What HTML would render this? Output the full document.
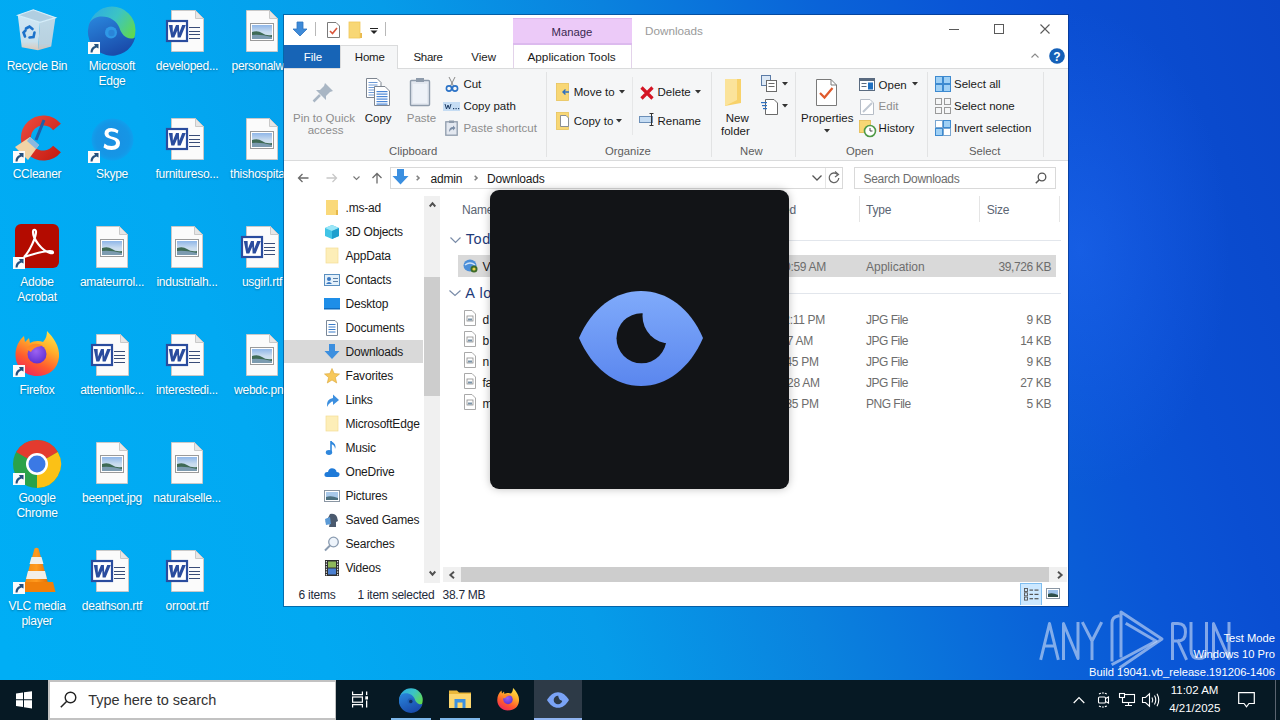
<!DOCTYPE html>
<html><head><meta charset="utf-8"><title>Desktop</title>
<style>
html,body{margin:0;padding:0;}
body{width:1280px;height:720px;overflow:hidden;position:relative;font-family:"Liberation Sans",sans-serif;}
.t{position:absolute;white-space:nowrap;line-height:1;}
.r{position:absolute;display:block;}
svg.r{overflow:visible;}
</style></head><body>
<div class="r" style="left:0;top:0;width:1280px;height:720px;background:radial-gradient(ellipse 150px 240px at 1080px 250px,rgba(40,110,250,.4),rgba(40,110,250,0)),linear-gradient(71deg,#00aef5 1.8%,#02a9f2 22.7%,#069ce9 41.1%,#0a82de 55.5%,#0a63d8 69.9%,#0a55d6 79%,#0a4ed2 85.6%,#0a46c8 100%);"></div>
<svg class="r" style="left:10px;top:4px" width="56" height="56" viewBox="0 0 56 56"><defs><linearGradient id="rbl" x1="0" y1="0" x2="0" y2="1"><stop offset="0" stop-color="#e6eef5"/><stop offset="0.75" stop-color="#dfe6ec"/><stop offset="1" stop-color="#f4cdb4"/></linearGradient><linearGradient id="rbr" x1="0" y1="0" x2="0" y2="1"><stop offset="0" stop-color="#d3dde6"/><stop offset="0.8" stop-color="#cdd6de"/><stop offset="1" stop-color="#e9c6b2"/></linearGradient></defs><g opacity="0.9"><path d="M7.8 11.3 L30 18.3 L28 46.3 L11.7 43.2 Z" fill="url(#rbl)"/><path d="M30 18.3 L45.5 13.6 L41.2 42.4 L28 46.3 Z" fill="url(#rbr)"/><path d="M7.8 11.3 L23.3 5.8 L45.5 13.6 L30 18.3 Z" fill="#c3d3e0" stroke="#eef5fa" stroke-width="1.2"/><g fill="none" stroke="#1f6cc6" stroke-width="2.6" stroke-linecap="round"><path d="M16 24.5 L19.5 22.5 L22.5 25"/><path d="M24.5 28.5 L23.5 33 L19.5 33.5"/><path d="M15 32.5 L13.5 28.5 L15.5 26.5"/></g></g></svg>
<div class="t" style="left:-163px;width:400px;text-align:center;top:60.00px;font-size:12px;color:#fff;text-shadow:0 1px 2px rgba(0,0,0,.3);letter-spacing:-0.25px;">Recycle Bin</div>
<svg class="r" style="left:12px;top:114px" width="50" height="48" viewBox="0 0 50 48"><defs><linearGradient id="ccr" x1="0" y1="0" x2="1" y2="1"><stop offset="0" stop-color="#e8473a"/><stop offset="1" stop-color="#c81e14"/></linearGradient></defs><path d="M45 13 A17.5 17.5 0 1 0 45 35" fill="none" stroke="url(#ccr)" stroke-width="10"/><path d="M32 6 L24 26" stroke="#1f5fa8" stroke-width="3"/><path d="M3 33 L18 23 L27 31 L16 46 Z" fill="#f1d3a6"/><path d="M18 23 L27 31 L24 35 L15 27 Z" fill="#8ab8e0"/></svg>
<svg class="r" style="left:13px;top:151px" width="12" height="12" viewBox="0 0 12 12"><rect x="0" y="0" width="12" height="12" fill="#fbfbfb"/><path d="M2.5 10.5 Q2.5 5 7 4 L6 2 L10.5 2 L10.5 6.5 L8.5 5.5 Q5 6.5 4.5 10.5 Z" fill="#24507e"/></svg>
<div class="t" style="left:-163px;width:400px;text-align:center;top:168.00px;font-size:12px;color:#fff;text-shadow:0 1px 2px rgba(0,0,0,.3);letter-spacing:-0.25px;">CCleaner</div>
<svg class="r" style="left:14px;top:223px" width="46" height="46" viewBox="0 0 46 46"><rect x="1" y="1" width="44" height="44" rx="6" fill="#b30b00"/><path d="M10 34 C16 28 22 14 22 9 C22 6 19 6 19 9 C19 16 28 28 36 30 C40 31 40 28 36 28 C28 28 16 32 10 34 Z" fill="none" stroke="#fff" stroke-width="2.2"/></svg>
<svg class="r" style="left:13px;top:257px" width="12" height="12" viewBox="0 0 12 12"><rect x="0" y="0" width="12" height="12" fill="#fbfbfb"/><path d="M2.5 10.5 Q2.5 5 7 4 L6 2 L10.5 2 L10.5 6.5 L8.5 5.5 Q5 6.5 4.5 10.5 Z" fill="#24507e"/></svg>
<div class="t" style="left:-163px;width:400px;text-align:center;top:276.00px;font-size:12px;color:#fff;text-shadow:0 1px 2px rgba(0,0,0,.3);letter-spacing:-0.25px;">Adobe</div>
<div class="t" style="left:-163px;width:400px;text-align:center;top:291.00px;font-size:12px;color:#fff;text-shadow:0 1px 2px rgba(0,0,0,.3);letter-spacing:-0.25px;">Acrobat</div>
<svg class="r" style="left:13px;top:329px" width="50" height="50" viewBox="0 0 50 50"><defs><linearGradient id="ff" x1="0.8" y1="0" x2="0.3" y2="1"><stop offset="0" stop-color="#ffe34a"/><stop offset="0.35" stop-color="#ffae2a"/><stop offset="0.7" stop-color="#ff5a2e"/><stop offset="1" stop-color="#f0285a"/></linearGradient><radialGradient id="ffp" cx="0.45" cy="0.35" r="0.7"><stop offset="0" stop-color="#9c62f2"/><stop offset="1" stop-color="#5d2ed0"/></radialGradient></defs><path d="M34 2 C40 8 47 17 46 28 C45 40 36 47 24 47 C12 47 2.5 38 2.5 26 C2.5 18 6 11 11 7 L12 13 L16 9 L17 14 C20 12 26 11 30 13 C33 10 34 6 34 2 Z" fill="url(#ff)"/><circle cx="24" cy="25" r="9.5" fill="url(#ffp)"/><path d="M13 20 C16 15 24 13 30 17 C25 17 20 19 18 23 Z" fill="#ff8a28"/></svg>
<svg class="r" style="left:13px;top:365px" width="12" height="12" viewBox="0 0 12 12"><rect x="0" y="0" width="12" height="12" fill="#fbfbfb"/><path d="M2.5 10.5 Q2.5 5 7 4 L6 2 L10.5 2 L10.5 6.5 L8.5 5.5 Q5 6.5 4.5 10.5 Z" fill="#24507e"/></svg>
<div class="t" style="left:-163px;width:400px;text-align:center;top:384.00px;font-size:12px;color:#fff;text-shadow:0 1px 2px rgba(0,0,0,.3);letter-spacing:-0.25px;">Firefox</div>
<svg class="r" style="left:12px;top:439px" width="50" height="50" viewBox="0 0 50 50"><circle cx="25" cy="25" r="24" fill="#2aa24a"/><path d="M25 25 L4.2 13 A24 24 0 0 1 45.8 13 Z" fill="#e33b2e"/><path d="M25 25 L45.8 13 A24 24 0 0 1 25 49 Z" fill="#fbc116"/><circle cx="25" cy="25" r="11" fill="#fff"/><circle cx="25" cy="25" r="8.5" fill="#3b79e5"/></svg>
<svg class="r" style="left:13px;top:473px" width="12" height="12" viewBox="0 0 12 12"><rect x="0" y="0" width="12" height="12" fill="#fbfbfb"/><path d="M2.5 10.5 Q2.5 5 7 4 L6 2 L10.5 2 L10.5 6.5 L8.5 5.5 Q5 6.5 4.5 10.5 Z" fill="#24507e"/></svg>
<div class="t" style="left:-163px;width:400px;text-align:center;top:492.00px;font-size:12px;color:#fff;text-shadow:0 1px 2px rgba(0,0,0,.3);letter-spacing:-0.25px;">Google</div>
<div class="t" style="left:-163px;width:400px;text-align:center;top:507.00px;font-size:12px;color:#fff;text-shadow:0 1px 2px rgba(0,0,0,.3);letter-spacing:-0.25px;">Chrome</div>
<svg class="r" style="left:15px;top:547px" width="44" height="48" viewBox="0 0 44 48"><defs><linearGradient id="vlc" x1="0" y1="0" x2="1" y2="0"><stop offset="0" stop-color="#f28a12"/><stop offset="0.5" stop-color="#ff9a1e"/><stop offset="1" stop-color="#e0700a"/></linearGradient></defs><path d="M19.5 1.5 Q21.5 0 23.5 1.5 L33 36 H10 Z" fill="url(#vlc)"/><path d="M16.5 10 H26.5 L28.5 17 H14.5 Z" fill="#f2efe9"/><path d="M13 24 H30 L32 32 H11 Z" fill="#f2efe9"/><path d="M5 35 H38 L40.5 45 H5.5 Z" fill="#f07f0a"/></svg>
<svg class="r" style="left:13px;top:582px" width="12" height="12" viewBox="0 0 12 12"><rect x="0" y="0" width="12" height="12" fill="#fbfbfb"/><path d="M2.5 10.5 Q2.5 5 7 4 L6 2 L10.5 2 L10.5 6.5 L8.5 5.5 Q5 6.5 4.5 10.5 Z" fill="#24507e"/></svg>
<div class="t" style="left:-163px;width:400px;text-align:center;top:600.00px;font-size:12px;color:#fff;text-shadow:0 1px 2px rgba(0,0,0,.3);letter-spacing:-0.25px;">VLC media</div>
<div class="t" style="left:-163px;width:400px;text-align:center;top:615.00px;font-size:12px;color:#fff;text-shadow:0 1px 2px rgba(0,0,0,.3);letter-spacing:-0.25px;">player</div>
<svg class="r" style="left:84px;top:2px" width="56" height="56" viewBox="0 0 56 56"><defs><linearGradient id="eg" x1="0" y1="0" x2="1" y2="0.7"><stop offset="0" stop-color="#2aa8e8"/><stop offset="0.5" stop-color="#3cc4c4"/><stop offset="1" stop-color="#66dc3c"/></linearGradient><linearGradient id="eb" x1="0" y1="0" x2="0.5" y2="1"><stop offset="0" stop-color="#2a88de"/><stop offset="1" stop-color="#1a4cab"/></linearGradient></defs><circle cx="28" cy="28" r="23.5" fill="url(#eg)"/><path d="M4.6 24 C6 17 12 14.5 18 14.5 C26 14.5 33 19 35.5 26 C37 31 41 36.5 47 36.5 C49 36.5 50.5 36 51.2 35.5 A23.5 23.5 0 0 1 4.6 24 Z" fill="url(#eb)"/><circle cx="27" cy="30.5" r="6" fill="#2f98e6"/><circle cx="27.5" cy="31" r="3.2" fill="#2a84d8"/></svg>
<svg class="r" style="left:88px;top:42px" width="12" height="12" viewBox="0 0 12 12"><rect x="0" y="0" width="12" height="12" fill="#fbfbfb"/><path d="M2.5 10.5 Q2.5 5 7 4 L6 2 L10.5 2 L10.5 6.5 L8.5 5.5 Q5 6.5 4.5 10.5 Z" fill="#24507e"/></svg>
<div class="t" style="left:-88px;width:400px;text-align:center;top:60.00px;font-size:12px;color:#fff;text-shadow:0 1px 2px rgba(0,0,0,.3);letter-spacing:-0.25px;">Microsoft</div>
<div class="t" style="left:-88px;width:400px;text-align:center;top:75.00px;font-size:12px;color:#fff;text-shadow:0 1px 2px rgba(0,0,0,.3);letter-spacing:-0.25px;">Edge</div>
<svg class="r" style="left:90px;top:117px" width="45" height="45" viewBox="0 0 45 45"><defs><radialGradient id="sk" cx="0.5" cy="0.5" r="0.5"><stop offset="0" stop-color="#1a8fe2"/><stop offset="0.8" stop-color="#1596e6"/><stop offset="1" stop-color="#0ea0ee"/></radialGradient></defs><circle cx="22.5" cy="22.5" r="21" fill="url(#sk)"/><path d="M28.5 13.5 Q25.5 11 21.5 11 Q14.5 11 14.5 16.5 Q14.5 20.5 21 22 Q26 23 26 26 Q26 29 21.5 29 Q17 29 14.5 26.5 L13.5 30.5 Q17 33 21.5 33 Q30 33 30 26 Q30 21.5 23.5 20 Q18.5 19 18.5 16.5 Q18.5 14.5 21.5 14.5 Q25 14.5 27.5 16.5 Z" fill="#fff"/></svg>
<svg class="r" style="left:88px;top:151px" width="12" height="12" viewBox="0 0 12 12"><rect x="0" y="0" width="12" height="12" fill="#fbfbfb"/><path d="M2.5 10.5 Q2.5 5 7 4 L6 2 L10.5 2 L10.5 6.5 L8.5 5.5 Q5 6.5 4.5 10.5 Z" fill="#24507e"/></svg>
<div class="t" style="left:-88px;width:400px;text-align:center;top:168.00px;font-size:12px;color:#fff;text-shadow:0 1px 2px rgba(0,0,0,.3);letter-spacing:-0.25px;">Skype</div>
<svg class="r" style="left:96px;top:226px" width="32" height="42" viewBox="0 0 32 42"><path d="M0.5 0.5 H23.5 L31.5 8.5 V41.5 H0.5 Z" fill="#fbfbfb" stroke="#c9c9c9" stroke-width="1"/><path d="M23.5 0.5 V8.5 H31.5 Z" fill="#e6e6e6" stroke="#c9c9c9" stroke-width="1"/></svg>
<svg class="r" style="left:100px;top:239px" width="24" height="18" viewBox="0 0 24 18"><defs><linearGradient id="sky" x1="0" y1="0" x2="0" y2="1"><stop offset="0" stop-color="#8fb6e8"/><stop offset="0.5" stop-color="#c9dcef"/><stop offset="1" stop-color="#d8e6f0"/></linearGradient></defs><rect x="0.5" y="0.5" width="23" height="17" fill="#fff" stroke="#9a9a9a"/><rect x="2" y="2" width="20" height="14" fill="url(#sky)"/><path d="M2 9 Q8 7 12 10 T22 12 V16 H2 Z" fill="#3e6a55"/><path d="M2 12 Q10 11 22 14 V16 H2 Z" fill="#7c9bb0"/></svg>
<div class="t" style="left:-88px;width:400px;text-align:center;top:276.00px;font-size:12px;color:#fff;text-shadow:0 1px 2px rgba(0,0,0,.3);letter-spacing:-0.25px;">amateurrol...</div>
<svg class="r" style="left:96px;top:334px" width="33" height="42" viewBox="0 0 33 42"><path d="M0.5 0.5 H24.5 L32.5 8.5 V41.5 H0.5 Z" fill="#fbfbfb" stroke="#c9c9c9" stroke-width="1"/><path d="M24.5 0.5 V8.5 H32.5 Z" fill="#e6e6e6" stroke="#c9c9c9" stroke-width="1"/></svg>
<div class="r" style="left:114px;top:351.0px;width:11px;height:1.3px;background:#3a4d78;"></div>
<div class="r" style="left:114px;top:354.6px;width:11px;height:1.3px;background:#3a4d78;"></div>
<div class="r" style="left:114px;top:358.2px;width:11px;height:1.3px;background:#3a4d78;"></div>
<div class="r" style="left:114px;top:361.8px;width:11px;height:1.3px;background:#3a4d78;"></div>
<svg class="r" style="left:91px;top:344px" width="22" height="22" viewBox="0 0 22 22"><rect x="1" y="1" width="20" height="20" fill="#fff" stroke="#2a4c9e" stroke-width="2.2"/><path d="M2.8 5 H6.6 L6.9 12.8 L10 5 H12.9 L13.2 12.8 L16.2 5 H19.8 L14.6 17.5 H11.6 L11.3 10.6 L8.3 17.5 H5.3 Z" fill="#2a4c9e"/></svg>
<div class="t" style="left:-88px;width:400px;text-align:center;top:384.00px;font-size:12px;color:#fff;text-shadow:0 1px 2px rgba(0,0,0,.3);letter-spacing:-0.25px;">attentionllc...</div>
<svg class="r" style="left:96px;top:442px" width="32" height="42" viewBox="0 0 32 42"><path d="M0.5 0.5 H23.5 L31.5 8.5 V41.5 H0.5 Z" fill="#fbfbfb" stroke="#c9c9c9" stroke-width="1"/><path d="M23.5 0.5 V8.5 H31.5 Z" fill="#e6e6e6" stroke="#c9c9c9" stroke-width="1"/></svg>
<svg class="r" style="left:100px;top:455px" width="24" height="18" viewBox="0 0 24 18"><defs><linearGradient id="sky" x1="0" y1="0" x2="0" y2="1"><stop offset="0" stop-color="#8fb6e8"/><stop offset="0.5" stop-color="#c9dcef"/><stop offset="1" stop-color="#d8e6f0"/></linearGradient></defs><rect x="0.5" y="0.5" width="23" height="17" fill="#fff" stroke="#9a9a9a"/><rect x="2" y="2" width="20" height="14" fill="url(#sky)"/><path d="M2 9 Q8 7 12 10 T22 12 V16 H2 Z" fill="#3e6a55"/><path d="M2 12 Q10 11 22 14 V16 H2 Z" fill="#7c9bb0"/></svg>
<div class="t" style="left:-88px;width:400px;text-align:center;top:492.00px;font-size:12px;color:#fff;text-shadow:0 1px 2px rgba(0,0,0,.3);letter-spacing:-0.25px;">beenpet.jpg</div>
<svg class="r" style="left:96px;top:550px" width="33" height="42" viewBox="0 0 33 42"><path d="M0.5 0.5 H24.5 L32.5 8.5 V41.5 H0.5 Z" fill="#fbfbfb" stroke="#c9c9c9" stroke-width="1"/><path d="M24.5 0.5 V8.5 H32.5 Z" fill="#e6e6e6" stroke="#c9c9c9" stroke-width="1"/></svg>
<div class="r" style="left:114px;top:567.0px;width:11px;height:1.3px;background:#3a4d78;"></div>
<div class="r" style="left:114px;top:570.6px;width:11px;height:1.3px;background:#3a4d78;"></div>
<div class="r" style="left:114px;top:574.2px;width:11px;height:1.3px;background:#3a4d78;"></div>
<div class="r" style="left:114px;top:577.8px;width:11px;height:1.3px;background:#3a4d78;"></div>
<svg class="r" style="left:91px;top:560px" width="22" height="22" viewBox="0 0 22 22"><rect x="1" y="1" width="20" height="20" fill="#fff" stroke="#2a4c9e" stroke-width="2.2"/><path d="M2.8 5 H6.6 L6.9 12.8 L10 5 H12.9 L13.2 12.8 L16.2 5 H19.8 L14.6 17.5 H11.6 L11.3 10.6 L8.3 17.5 H5.3 Z" fill="#2a4c9e"/></svg>
<div class="t" style="left:-88px;width:400px;text-align:center;top:600.00px;font-size:12px;color:#fff;text-shadow:0 1px 2px rgba(0,0,0,.3);letter-spacing:-0.25px;">deathson.rtf</div>
<svg class="r" style="left:171px;top:10px" width="33" height="42" viewBox="0 0 33 42"><path d="M0.5 0.5 H24.5 L32.5 8.5 V41.5 H0.5 Z" fill="#fbfbfb" stroke="#c9c9c9" stroke-width="1"/><path d="M24.5 0.5 V8.5 H32.5 Z" fill="#e6e6e6" stroke="#c9c9c9" stroke-width="1"/></svg>
<div class="r" style="left:189px;top:27.0px;width:11px;height:1.3px;background:#3a4d78;"></div>
<div class="r" style="left:189px;top:30.6px;width:11px;height:1.3px;background:#3a4d78;"></div>
<div class="r" style="left:189px;top:34.2px;width:11px;height:1.3px;background:#3a4d78;"></div>
<div class="r" style="left:189px;top:37.8px;width:11px;height:1.3px;background:#3a4d78;"></div>
<svg class="r" style="left:166px;top:20px" width="22" height="22" viewBox="0 0 22 22"><rect x="1" y="1" width="20" height="20" fill="#fff" stroke="#2a4c9e" stroke-width="2.2"/><path d="M2.8 5 H6.6 L6.9 12.8 L10 5 H12.9 L13.2 12.8 L16.2 5 H19.8 L14.6 17.5 H11.6 L11.3 10.6 L8.3 17.5 H5.3 Z" fill="#2a4c9e"/></svg>
<div class="t" style="left:-13px;width:400px;text-align:center;top:60.00px;font-size:12px;color:#fff;text-shadow:0 1px 2px rgba(0,0,0,.3);letter-spacing:-0.25px;">developed...</div>
<svg class="r" style="left:171px;top:118px" width="33" height="42" viewBox="0 0 33 42"><path d="M0.5 0.5 H24.5 L32.5 8.5 V41.5 H0.5 Z" fill="#fbfbfb" stroke="#c9c9c9" stroke-width="1"/><path d="M24.5 0.5 V8.5 H32.5 Z" fill="#e6e6e6" stroke="#c9c9c9" stroke-width="1"/></svg>
<div class="r" style="left:189px;top:135.0px;width:11px;height:1.3px;background:#3a4d78;"></div>
<div class="r" style="left:189px;top:138.6px;width:11px;height:1.3px;background:#3a4d78;"></div>
<div class="r" style="left:189px;top:142.2px;width:11px;height:1.3px;background:#3a4d78;"></div>
<div class="r" style="left:189px;top:145.8px;width:11px;height:1.3px;background:#3a4d78;"></div>
<svg class="r" style="left:166px;top:128px" width="22" height="22" viewBox="0 0 22 22"><rect x="1" y="1" width="20" height="20" fill="#fff" stroke="#2a4c9e" stroke-width="2.2"/><path d="M2.8 5 H6.6 L6.9 12.8 L10 5 H12.9 L13.2 12.8 L16.2 5 H19.8 L14.6 17.5 H11.6 L11.3 10.6 L8.3 17.5 H5.3 Z" fill="#2a4c9e"/></svg>
<div class="t" style="left:-13px;width:400px;text-align:center;top:168.00px;font-size:12px;color:#fff;text-shadow:0 1px 2px rgba(0,0,0,.3);letter-spacing:-0.25px;">furnitureso...</div>
<svg class="r" style="left:171px;top:226px" width="32" height="42" viewBox="0 0 32 42"><path d="M0.5 0.5 H23.5 L31.5 8.5 V41.5 H0.5 Z" fill="#fbfbfb" stroke="#c9c9c9" stroke-width="1"/><path d="M23.5 0.5 V8.5 H31.5 Z" fill="#e6e6e6" stroke="#c9c9c9" stroke-width="1"/></svg>
<svg class="r" style="left:175px;top:239px" width="24" height="18" viewBox="0 0 24 18"><defs><linearGradient id="sky" x1="0" y1="0" x2="0" y2="1"><stop offset="0" stop-color="#8fb6e8"/><stop offset="0.5" stop-color="#c9dcef"/><stop offset="1" stop-color="#d8e6f0"/></linearGradient></defs><rect x="0.5" y="0.5" width="23" height="17" fill="#fff" stroke="#9a9a9a"/><rect x="2" y="2" width="20" height="14" fill="url(#sky)"/><path d="M2 9 Q8 7 12 10 T22 12 V16 H2 Z" fill="#3e6a55"/><path d="M2 12 Q10 11 22 14 V16 H2 Z" fill="#7c9bb0"/></svg>
<div class="t" style="left:-13px;width:400px;text-align:center;top:276.00px;font-size:12px;color:#fff;text-shadow:0 1px 2px rgba(0,0,0,.3);letter-spacing:-0.25px;">industrialh...</div>
<svg class="r" style="left:171px;top:334px" width="33" height="42" viewBox="0 0 33 42"><path d="M0.5 0.5 H24.5 L32.5 8.5 V41.5 H0.5 Z" fill="#fbfbfb" stroke="#c9c9c9" stroke-width="1"/><path d="M24.5 0.5 V8.5 H32.5 Z" fill="#e6e6e6" stroke="#c9c9c9" stroke-width="1"/></svg>
<div class="r" style="left:189px;top:351.0px;width:11px;height:1.3px;background:#3a4d78;"></div>
<div class="r" style="left:189px;top:354.6px;width:11px;height:1.3px;background:#3a4d78;"></div>
<div class="r" style="left:189px;top:358.2px;width:11px;height:1.3px;background:#3a4d78;"></div>
<div class="r" style="left:189px;top:361.8px;width:11px;height:1.3px;background:#3a4d78;"></div>
<svg class="r" style="left:166px;top:344px" width="22" height="22" viewBox="0 0 22 22"><rect x="1" y="1" width="20" height="20" fill="#fff" stroke="#2a4c9e" stroke-width="2.2"/><path d="M2.8 5 H6.6 L6.9 12.8 L10 5 H12.9 L13.2 12.8 L16.2 5 H19.8 L14.6 17.5 H11.6 L11.3 10.6 L8.3 17.5 H5.3 Z" fill="#2a4c9e"/></svg>
<div class="t" style="left:-13px;width:400px;text-align:center;top:384.00px;font-size:12px;color:#fff;text-shadow:0 1px 2px rgba(0,0,0,.3);letter-spacing:-0.25px;">interestedi...</div>
<svg class="r" style="left:171px;top:442px" width="32" height="42" viewBox="0 0 32 42"><path d="M0.5 0.5 H23.5 L31.5 8.5 V41.5 H0.5 Z" fill="#fbfbfb" stroke="#c9c9c9" stroke-width="1"/><path d="M23.5 0.5 V8.5 H31.5 Z" fill="#e6e6e6" stroke="#c9c9c9" stroke-width="1"/></svg>
<svg class="r" style="left:175px;top:455px" width="24" height="18" viewBox="0 0 24 18"><defs><linearGradient id="sky" x1="0" y1="0" x2="0" y2="1"><stop offset="0" stop-color="#8fb6e8"/><stop offset="0.5" stop-color="#c9dcef"/><stop offset="1" stop-color="#d8e6f0"/></linearGradient></defs><rect x="0.5" y="0.5" width="23" height="17" fill="#fff" stroke="#9a9a9a"/><rect x="2" y="2" width="20" height="14" fill="url(#sky)"/><path d="M2 9 Q8 7 12 10 T22 12 V16 H2 Z" fill="#3e6a55"/><path d="M2 12 Q10 11 22 14 V16 H2 Z" fill="#7c9bb0"/></svg>
<div class="t" style="left:-13px;width:400px;text-align:center;top:492.00px;font-size:12px;color:#fff;text-shadow:0 1px 2px rgba(0,0,0,.3);letter-spacing:-0.25px;">naturalselle...</div>
<svg class="r" style="left:171px;top:550px" width="33" height="42" viewBox="0 0 33 42"><path d="M0.5 0.5 H24.5 L32.5 8.5 V41.5 H0.5 Z" fill="#fbfbfb" stroke="#c9c9c9" stroke-width="1"/><path d="M24.5 0.5 V8.5 H32.5 Z" fill="#e6e6e6" stroke="#c9c9c9" stroke-width="1"/></svg>
<div class="r" style="left:189px;top:567.0px;width:11px;height:1.3px;background:#3a4d78;"></div>
<div class="r" style="left:189px;top:570.6px;width:11px;height:1.3px;background:#3a4d78;"></div>
<div class="r" style="left:189px;top:574.2px;width:11px;height:1.3px;background:#3a4d78;"></div>
<div class="r" style="left:189px;top:577.8px;width:11px;height:1.3px;background:#3a4d78;"></div>
<svg class="r" style="left:166px;top:560px" width="22" height="22" viewBox="0 0 22 22"><rect x="1" y="1" width="20" height="20" fill="#fff" stroke="#2a4c9e" stroke-width="2.2"/><path d="M2.8 5 H6.6 L6.9 12.8 L10 5 H12.9 L13.2 12.8 L16.2 5 H19.8 L14.6 17.5 H11.6 L11.3 10.6 L8.3 17.5 H5.3 Z" fill="#2a4c9e"/></svg>
<div class="t" style="left:-13px;width:400px;text-align:center;top:600.00px;font-size:12px;color:#fff;text-shadow:0 1px 2px rgba(0,0,0,.3);letter-spacing:-0.25px;">orroot.rtf</div>
<svg class="r" style="left:246px;top:10px" width="32" height="42" viewBox="0 0 32 42"><path d="M0.5 0.5 H23.5 L31.5 8.5 V41.5 H0.5 Z" fill="#fbfbfb" stroke="#c9c9c9" stroke-width="1"/><path d="M23.5 0.5 V8.5 H31.5 Z" fill="#e6e6e6" stroke="#c9c9c9" stroke-width="1"/></svg>
<svg class="r" style="left:250px;top:23px" width="24" height="18" viewBox="0 0 24 18"><defs><linearGradient id="sky" x1="0" y1="0" x2="0" y2="1"><stop offset="0" stop-color="#8fb6e8"/><stop offset="0.5" stop-color="#c9dcef"/><stop offset="1" stop-color="#d8e6f0"/></linearGradient></defs><rect x="0.5" y="0.5" width="23" height="17" fill="#fff" stroke="#9a9a9a"/><rect x="2" y="2" width="20" height="14" fill="url(#sky)"/><path d="M2 9 Q8 7 12 10 T22 12 V16 H2 Z" fill="#3e6a55"/><path d="M2 12 Q10 11 22 14 V16 H2 Z" fill="#7c9bb0"/></svg>
<div class="t" style="left:62px;width:400px;text-align:center;top:60.00px;font-size:12px;color:#fff;text-shadow:0 1px 2px rgba(0,0,0,.3);letter-spacing:-0.25px;">personalw...</div>
<svg class="r" style="left:246px;top:118px" width="32" height="42" viewBox="0 0 32 42"><path d="M0.5 0.5 H23.5 L31.5 8.5 V41.5 H0.5 Z" fill="#fbfbfb" stroke="#c9c9c9" stroke-width="1"/><path d="M23.5 0.5 V8.5 H31.5 Z" fill="#e6e6e6" stroke="#c9c9c9" stroke-width="1"/></svg>
<svg class="r" style="left:250px;top:131px" width="24" height="18" viewBox="0 0 24 18"><defs><linearGradient id="sky" x1="0" y1="0" x2="0" y2="1"><stop offset="0" stop-color="#8fb6e8"/><stop offset="0.5" stop-color="#c9dcef"/><stop offset="1" stop-color="#d8e6f0"/></linearGradient></defs><rect x="0.5" y="0.5" width="23" height="17" fill="#fff" stroke="#9a9a9a"/><rect x="2" y="2" width="20" height="14" fill="url(#sky)"/><path d="M2 9 Q8 7 12 10 T22 12 V16 H2 Z" fill="#3e6a55"/><path d="M2 12 Q10 11 22 14 V16 H2 Z" fill="#7c9bb0"/></svg>
<div class="t" style="left:62px;width:400px;text-align:center;top:168.00px;font-size:12px;color:#fff;text-shadow:0 1px 2px rgba(0,0,0,.3);letter-spacing:-0.25px;">thishospita...</div>
<svg class="r" style="left:246px;top:226px" width="33" height="42" viewBox="0 0 33 42"><path d="M0.5 0.5 H24.5 L32.5 8.5 V41.5 H0.5 Z" fill="#fbfbfb" stroke="#c9c9c9" stroke-width="1"/><path d="M24.5 0.5 V8.5 H32.5 Z" fill="#e6e6e6" stroke="#c9c9c9" stroke-width="1"/></svg>
<div class="r" style="left:264px;top:243.0px;width:11px;height:1.3px;background:#3a4d78;"></div>
<div class="r" style="left:264px;top:246.6px;width:11px;height:1.3px;background:#3a4d78;"></div>
<div class="r" style="left:264px;top:250.2px;width:11px;height:1.3px;background:#3a4d78;"></div>
<div class="r" style="left:264px;top:253.8px;width:11px;height:1.3px;background:#3a4d78;"></div>
<svg class="r" style="left:241px;top:236px" width="22" height="22" viewBox="0 0 22 22"><rect x="1" y="1" width="20" height="20" fill="#fff" stroke="#2a4c9e" stroke-width="2.2"/><path d="M2.8 5 H6.6 L6.9 12.8 L10 5 H12.9 L13.2 12.8 L16.2 5 H19.8 L14.6 17.5 H11.6 L11.3 10.6 L8.3 17.5 H5.3 Z" fill="#2a4c9e"/></svg>
<div class="t" style="left:62px;width:400px;text-align:center;top:276.00px;font-size:12px;color:#fff;text-shadow:0 1px 2px rgba(0,0,0,.3);letter-spacing:-0.25px;">usgirl.rtf</div>
<svg class="r" style="left:246px;top:334px" width="32" height="42" viewBox="0 0 32 42"><path d="M0.5 0.5 H23.5 L31.5 8.5 V41.5 H0.5 Z" fill="#fbfbfb" stroke="#c9c9c9" stroke-width="1"/><path d="M23.5 0.5 V8.5 H31.5 Z" fill="#e6e6e6" stroke="#c9c9c9" stroke-width="1"/></svg>
<svg class="r" style="left:250px;top:347px" width="24" height="18" viewBox="0 0 24 18"><defs><linearGradient id="sky" x1="0" y1="0" x2="0" y2="1"><stop offset="0" stop-color="#8fb6e8"/><stop offset="0.5" stop-color="#c9dcef"/><stop offset="1" stop-color="#d8e6f0"/></linearGradient></defs><rect x="0.5" y="0.5" width="23" height="17" fill="#fff" stroke="#9a9a9a"/><rect x="2" y="2" width="20" height="14" fill="url(#sky)"/><path d="M2 9 Q8 7 12 10 T22 12 V16 H2 Z" fill="#3e6a55"/><path d="M2 12 Q10 11 22 14 V16 H2 Z" fill="#7c9bb0"/></svg>
<div class="t" style="left:62px;width:400px;text-align:center;top:384.00px;font-size:12px;color:#fff;text-shadow:0 1px 2px rgba(0,0,0,.3);letter-spacing:-0.25px;">webdc.png</div>
<svg class="r" style="left:1030px;top:600px" width="210" height="75" viewBox="1030 600 210 75"><g fill="none" stroke="rgba(205,220,245,0.62)" stroke-width="3" stroke-linejoin="round" stroke-linecap="square"><path d="M1041 658.5 L1049.5 623.5 L1058 658.5 M1044.5 646 H1054.5"/><path d="M1063.5 658.5 V623.5 L1078 658.5 V623.5"/><path d="M1083 623.5 L1092 641 L1101 623.5 M1092 641 V658.5"/><path d="M1112 660 V623 Q1112 617 1118 616"/><path d="M1121 656 V612 L1162 639 L1121 667"/><path d="M1127 624 L1156 641 L1113 664"/><path d="M1172.5 658.5 V623.5 H1178 Q1185.5 623.5 1185.5 632 Q1185.5 641 1178 641 H1172.5 M1178 641 L1186 658.5"/><path d="M1191 623.5 V650 Q1191 658.5 1199 658.5 Q1206.5 658.5 1206.5 650 V623.5"/><path d="M1213.5 658.5 V623.5 L1229 658.5 V623.5"/></g></svg>
<div class="t" style="right:5px;top:633.00px;font-size:11.2px;color:#fff;">Test Mode</div>
<div class="t" style="right:5px;top:649.00px;font-size:11.2px;color:#fff;">Windows 10 Pro</div>
<div class="t" style="right:5px;top:667.00px;font-size:11.2px;color:#fff;">Build 19041.vb_release.191206-1406</div>
<div class="r" style="left:283px;top:14px;width:786px;height:593px;background:#fff;box-sizing:border-box;border:1px solid rgba(0,35,90,.45);background-clip:padding-box;"></div>
<svg class="r" style="left:292px;top:21px;" width="16" height="16" viewBox="0 0 16 16"><path d="M5 1 H11 V8 H15 L8 15 L1 8 H5 Z" fill="#3d8ad8" stroke="#2f74c0" stroke-width="0.8"/></svg>
<div class="r" style="left:315px;top:22px;width:1px;height:14px;background:#b8b8b8;"></div>
<svg class="r" style="left:327px;top:22px;" width="13" height="16" viewBox="0 0 13 16"><path d="M0.5 0.5 H9 L12.5 4 V15.5 H0.5 Z" fill="#fff" stroke="#7a7a7a"/><path d="M3 9 L5.5 11.5 L10 6" fill="none" stroke="#d9553a" stroke-width="1.6"/></svg>
<svg class="r" style="left:349px;top:22px;" width="13" height="16" viewBox="0 0 13 16"><rect x="0" y="0" width="11" height="16" fill="#f8d775"/><rect x="11" y="11" width="2" height="5" fill="#e9b94e"/><rect x="0" y="0" width="11" height="16" fill="none" stroke="#f0c75a" stroke-width="0.8"/></svg>
<svg class="r" style="left:370px;top:28px;" width="8" height="6" viewBox="0 0 8 6"><rect x="0" y="0" width="8" height="1" fill="#222"/><path d="M0.5 2.5 H7.5 L4 6 Z" fill="#222"/></svg>
<div class="r" style="left:385px;top:22px;width:1px;height:14px;background:#b8b8b8;"></div>
<div class="r" style="left:513px;top:18px;width:119px;height:27px;background:#eccaf8;box-shadow:inset 0 1px 0 #dcb6ee, inset 0 -2px 0 #dcbaee;"></div>
<div class="t" style="left:372px;width:400px;text-align:center;top:27.00px;font-size:11.3px;color:#3a2850;">Manage</div>
<div class="t" style="left:645px;top:25.00px;font-size:11.7px;color:#9a9a9a;">Downloads</div>
<div class="r" style="left:949px;top:29px;width:10px;height:1px;background:#5a5a5a;"></div>
<div class="r" style="left:994px;top:24px;width:10px;height:10px;background:transparent;box-sizing:border-box;border:1px solid #5a5a5a;"></div>
<svg class="r" style="left:1040px;top:24px;" width="10" height="10" viewBox="0 0 10 10"><path d="M0.5 0.5 L9.5 9.5 M9.5 0.5 L0.5 9.5" stroke="#5a5a5a" stroke-width="1.1"/></svg>
<div class="r" style="left:284px;top:45px;width:56px;height:23px;background:#1764b6;"></div>
<div class="t" style="left:303.7px;top:52.00px;font-size:11.5px;color:#fff;">File</div>
<div class="r" style="left:340px;top:45px;width:58px;height:24px;background:#f5f6f7;box-sizing:border-box;border:1px solid #dadbdc;border-bottom:none;"></div>
<div class="t" style="left:354.8px;top:52.00px;font-size:11.5px;color:#1a1a1a;letter-spacing:-0.2px;">Home</div>
<div class="t" style="left:413.5px;top:52.00px;font-size:11.5px;color:#1a1a1a;letter-spacing:-0.3px;">Share</div>
<div class="t" style="left:471.3px;top:52.00px;font-size:11.5px;color:#1a1a1a;">View</div>
<div class="r" style="left:513px;top:45px;width:1px;height:23px;background:#e3d3ea;"></div>
<div class="r" style="left:631px;top:45px;width:1px;height:23px;background:#e3d3ea;"></div>
<div class="t" style="left:527.4px;top:52.00px;font-size:11.8px;color:#1a1a1a;">Application Tools</div>
<svg class="r" style="left:1031px;top:53px;" width="8" height="5" viewBox="0 0 8 5"><path d="M0.5 4.5 L4 1 L7.5 4.5" fill="none" stroke="#8a8a8a" stroke-width="1.1"/></svg>
<svg class="r" style="left:1049px;top:48px;" width="16" height="16" viewBox="0 0 16 16"><circle cx="8" cy="8" r="7.8" fill="#1560b8"/><text x="8" y="12.6" text-anchor="middle" font-family="Liberation Sans" font-weight="bold" font-size="12" fill="#fff">?</text></svg>
<div class="r" style="left:284px;top:68px;width:784px;height:93px;background:#f5f6f7;box-sizing:border-box;border-top:1px solid #dadbdc;border-bottom:1px solid #dadbdc;"></div>
<div class="r" style="left:340px;top:68px;width:57px;height:1px;background:#f5f6f7;"></div>
<div class="r" style="left:546px;top:72px;width:1px;height:85px;background:#e2e3e4;"></div>
<div class="r" style="left:711px;top:72px;width:1px;height:85px;background:#e2e3e4;"></div>
<div class="r" style="left:795px;top:72px;width:1px;height:85px;background:#e2e3e4;"></div>
<div class="r" style="left:927px;top:72px;width:1px;height:85px;background:#e2e3e4;"></div>
<div class="r" style="left:1043px;top:72px;width:1px;height:85px;background:#e2e3e4;"></div>
<div class="t" style="left:389px;top:146.00px;font-size:11.3px;color:#5d5d5d;">Clipboard</div>
<div class="t" style="left:605px;top:146.00px;font-size:11.3px;color:#5d5d5d;">Organize</div>
<div class="t" style="left:740px;top:146.00px;font-size:11.3px;color:#5d5d5d;">New</div>
<div class="t" style="left:846px;top:146.00px;font-size:11.3px;color:#5d5d5d;">Open</div>
<div class="t" style="left:969px;top:146.00px;font-size:11.3px;color:#5d5d5d;">Select</div>
<svg class="r" style="left:312px;top:82px;" width="22" height="21" viewBox="0 0 22 21"><path d="M13 1 L21 9 L18 10 L14 14 L14 18 L4 8 L8 8 L12 4 Z" fill="#a9b6c4"/><path d="M8 13 L1.5 19.5" stroke="#a9b6c4" stroke-width="2.5"/></svg>
<div class="t" style="left:293px;top:113.00px;font-size:11.5px;color:#8d8d8d;">Pin to Quick</div>
<div class="t" style="left:307.7px;top:125.00px;font-size:11.5px;color:#8d8d8d;">access</div>
<svg class="r" style="left:365px;top:77px;" width="26" height="30" viewBox="0 0 26 30"><path d="M1.5 1.5 H12 L16 5.5 V20.5 H1.5 Z" fill="#fff" stroke="#7d8590"/><rect x="3.5" y="5.0" width="9" height="1" fill="#6e9ad6"/><rect x="3.5" y="7.5" width="9" height="1" fill="#6e9ad6"/><rect x="3.5" y="10.0" width="9" height="1" fill="#6e9ad6"/><rect x="3.5" y="12.5" width="9" height="1" fill="#6e9ad6"/><rect x="3.5" y="15.0" width="9" height="1" fill="#6e9ad6"/><rect x="3.5" y="17.5" width="9" height="1" fill="#6e9ad6"/><path d="M9.5 9.5 H20 L24.5 14 V28.5 H9.5 Z" fill="#fff" stroke="#7d8590"/><rect x="11.5" y="14.0" width="11" height="1.2" fill="#4a86d6"/><rect x="11.5" y="16.5" width="11" height="1.2" fill="#4a86d6"/><rect x="11.5" y="19.0" width="11" height="1.2" fill="#4a86d6"/><rect x="11.5" y="21.5" width="11" height="1.2" fill="#4a86d6"/><rect x="11.5" y="24.0" width="11" height="1.2" fill="#4a86d6"/><rect x="11.5" y="26.5" width="11" height="1.2" fill="#4a86d6"/></svg>
<div class="t" style="left:364.7px;top:113.00px;font-size:11.5px;color:#1a1a1a;">Copy</div>
<svg class="r" style="left:409px;top:77px;" width="22" height="29" viewBox="0 0 22 29"><rect x="1.5" y="3.5" width="19" height="25" rx="1" fill="#e3e8f0" stroke="#8e9bab" stroke-width="1.4"/><rect x="7" y="1" width="8" height="4" fill="#8e9bab"/><rect x="4" y="7" width="14" height="19" fill="#eef2f8"/></svg>
<div class="t" style="left:406.8px;top:113.00px;font-size:11.5px;color:#8d8d8d;">Paste</div>
<svg class="r" style="left:446px;top:76px;" width="12" height="16" viewBox="0 0 12 16"><path d="M3 1 L7.5 10 M9 1 L4.5 10" stroke="#8a8a8a" stroke-width="1"/><circle cx="3" cy="12.5" r="2.6" fill="none" stroke="#2b72c6" stroke-width="1.6"/><circle cx="9" cy="12.5" r="2.6" fill="none" stroke="#2b72c6" stroke-width="1.6"/></svg>
<div class="t" style="left:463.4px;top:79.00px;font-size:11.5px;color:#1a1a1a;">Cut</div>
<svg class="r" style="left:443px;top:102px;" width="17" height="9" viewBox="0 0 17 9"><rect x="0" y="0" width="17" height="9" fill="#c5dcf3"/><path d="M2 2 L3.5 7 L5 3 L6.5 7 L8 2" fill="none" stroke="#1f3d66" stroke-width="1"/><rect x="10" y="6" width="1.2" height="1.2" fill="#1f3d66"/><rect x="12.5" y="6" width="1.2" height="1.2" fill="#1f3d66"/><rect x="15" y="6" width="1.2" height="1.2" fill="#1f3d66"/></svg>
<div class="t" style="left:463.4px;top:101.00px;font-size:11.5px;color:#1a1a1a;">Copy path</div>
<svg class="r" style="left:445px;top:120px;" width="13" height="16" viewBox="0 0 13 16"><rect x="0.8" y="1.8" width="11.4" height="13.4" fill="#e3e8f0" stroke="#8e9bab" stroke-width="1.3"/><rect x="4" y="0.5" width="5" height="2.5" fill="#8e9bab"/><path d="M4 12 Q4 7 8 7 V5.5 L10.5 8 L8 10.5 V9 Q6 9 4 12Z" fill="#7c8ea6"/></svg>
<div class="t" style="left:463.4px;top:123.00px;font-size:11.5px;color:#8d8d8d;">Paste shortcut</div>
<svg class="r" style="left:556px;top:83px;" width="14" height="18" viewBox="0 0 14 18"><rect x="0.5" y="0.5" width="12" height="17" fill="#f8d775" stroke="#e8c25a" stroke-width="0.8"/><path d="M13 9 H7 M9.5 6.5 L7 9 L9.5 11.5" stroke="#2e70c0" stroke-width="1.4" fill="none"/></svg>
<div class="t" style="left:573.7px;top:87.00px;font-size:11.5px;color:#1a1a1a;">Move to</div>
<svg class="r" style="left:619px;top:90px;" width="6" height="4" viewBox="0 0 6 4"><path d="M0 0 H6 L3 3.5 Z" fill="#333"/></svg>
<svg class="r" style="left:556px;top:112px;" width="14" height="18" viewBox="0 0 14 18"><rect x="0.5" y="0.5" width="12" height="17" fill="#f8d775" stroke="#e8c25a" stroke-width="0.8"/><path d="M4.5 3.5 H10 L12.5 6 V14.5 H4.5 Z" fill="#fff" stroke="#7d8590" stroke-width="0.9"/></svg>
<div class="t" style="left:573.7px;top:116.00px;font-size:11.5px;color:#1a1a1a;">Copy to</div>
<svg class="r" style="left:616px;top:119px;" width="6" height="4" viewBox="0 0 6 4"><path d="M0 0 H6 L3 3.5 Z" fill="#333"/></svg>
<div class="r" style="left:632px;top:77px;width:1px;height:58px;background:#e6e7e8;"></div>
<svg class="r" style="left:640px;top:86px;" width="14" height="14" viewBox="0 0 14 14"><path d="M1.5 1.5 L12.5 12.5 M12.5 1.5 L1.5 12.5" stroke="#d41524" stroke-width="3.2"/></svg>
<div class="t" style="left:657.5px;top:87.00px;font-size:11.5px;color:#1a1a1a;">Delete</div>
<svg class="r" style="left:695px;top:90px;" width="6" height="4" viewBox="0 0 6 4"><path d="M0 0 H6 L3 3.5 Z" fill="#333"/></svg>
<svg class="r" style="left:639px;top:113px;" width="17" height="13" viewBox="0 0 17 13"><rect x="0.5" y="3.5" width="13" height="6" fill="#c5dcf3" stroke="#6c8fb8"/><path d="M12.5 0.5 V12.5 M10.5 0.5 H14.5 M10.5 12.5 H14.5" stroke="#333" stroke-width="1"/></svg>
<div class="t" style="left:657.5px;top:116.00px;font-size:11.5px;color:#1a1a1a;">Rename</div>
<svg class="r" style="left:723px;top:78px;" width="22" height="29" viewBox="0 0 22 29"><path d="M2 1 H18 V25 L2 28 Z" fill="#f8d26a"/><path d="M2 1 H14 V22 L2 28 Z" fill="#fbe39a"/></svg>
<div class="t" style="left:725.7px;top:113.00px;font-size:11.5px;color:#1a1a1a;">New</div>
<div class="t" style="left:721px;top:126.00px;font-size:11.5px;color:#1a1a1a;">folder</div>
<svg class="r" style="left:761px;top:75px;" width="17" height="17" viewBox="0 0 17 17"><rect x="0.5" y="0.5" width="9" height="10" fill="#dce8f5" stroke="#5b7ba6"/><rect x="5.5" y="5.5" width="10" height="11" fill="#fff" stroke="#6a6a6a"/><rect x="7.5" y="8" width="6" height="1" fill="#6a6a6a"/><rect x="7.5" y="11" width="6" height="1" fill="#6a6a6a"/></svg>
<svg class="r" style="left:782px;top:82px;" width="6" height="4" viewBox="0 0 6 4"><path d="M0 0 H6 L3 3.5 Z" fill="#333"/></svg>
<svg class="r" style="left:761px;top:97px;" width="17" height="18" viewBox="0 0 17 18"><path d="M4.5 2.5 H13 L16.5 6 V17.5 H4.5 Z" fill="#fff" stroke="#6a6a6a"/><rect x="0" y="5" width="6" height="1.2" fill="#2e70c0"/><rect x="1" y="8" width="5" height="1.2" fill="#2e70c0"/><rect x="2" y="11" width="4" height="1.2" fill="#2e70c0"/></svg>
<svg class="r" style="left:782px;top:104px;" width="6" height="4" viewBox="0 0 6 4"><path d="M0 0 H6 L3 3.5 Z" fill="#333"/></svg>
<svg class="r" style="left:815px;top:78px;" width="23" height="29" viewBox="0 0 23 29"><path d="M1.5 1.5 H16 L21.5 7 V27.5 H1.5 Z" fill="#fff" stroke="#7a7a7a"/><path d="M16 1.5 V7 H21.5" fill="none" stroke="#7a7a7a"/><path d="M5 15 L9.5 19.5 L17.5 10" fill="none" stroke="#e05a2c" stroke-width="2.2"/></svg>
<div class="t" style="left:801px;top:113.00px;font-size:11.5px;color:#1a1a1a;">Properties</div>
<svg class="r" style="left:824px;top:129px;" width="6" height="4" viewBox="0 0 6 4"><path d="M0 0 H6 L3 3.5 Z" fill="#333"/></svg>
<svg class="r" style="left:859px;top:78px;" width="16" height="13" viewBox="0 0 16 13"><rect x="0.5" y="0.5" width="15" height="12" fill="#fff" stroke="#5a6b80"/><rect x="0.5" y="0.5" width="15" height="2.5" fill="#5a6b80"/><rect x="9" y="4.5" width="5" height="7" fill="#1f6fc0"/><rect x="2.5" y="5" width="5" height="1" fill="#5a6b80"/><rect x="2.5" y="8" width="5" height="1" fill="#5a6b80"/></svg>
<div class="t" style="left:878.6px;top:80.00px;font-size:11.5px;color:#1a1a1a;">Open</div>
<svg class="r" style="left:912px;top:82px;" width="6" height="4" viewBox="0 0 6 4"><path d="M0 0 H6 L3 3.5 Z" fill="#333"/></svg>
<svg class="r" style="left:860px;top:99px;" width="15" height="16" viewBox="0 0 15 16"><path d="M0.5 0.5 H10 L13.5 4 V15.5 H0.5 Z" fill="#fff" stroke="#b5bcc6"/><path d="M3 13 L12 4" stroke="#c0c8d2" stroke-width="2"/></svg>
<div class="t" style="left:878.6px;top:101.00px;font-size:11.5px;color:#8d8d8d;">Edit</div>
<svg class="r" style="left:859px;top:120px;" width="17" height="17" viewBox="0 0 17 17"><rect x="0.5" y="0.5" width="11" height="12" fill="#f8d775" stroke="#e3b94c" stroke-width="0.8"/><circle cx="11" cy="11" r="5.5" fill="#fff" stroke="#4f9a46" stroke-width="1.6"/><path d="M11 8 V11 H13.5" stroke="#444" stroke-width="1" fill="none"/></svg>
<div class="t" style="left:878.6px;top:123.00px;font-size:11.5px;color:#1a1a1a;">History</div>
<svg class="r" style="left:935px;top:76px;" width="16" height="16" viewBox="0 0 16 16"><rect x="0.5" y="0.5" width="7" height="7" fill="#9fd0f5" stroke="#3d8ad0"/><rect x="8.5" y="0.5" width="7" height="7" fill="#9fd0f5" stroke="#3d8ad0"/><rect x="0.5" y="8.5" width="7" height="7" fill="#9fd0f5" stroke="#3d8ad0"/><rect x="8.5" y="8.5" width="7" height="7" fill="#9fd0f5" stroke="#3d8ad0"/></svg>
<div class="t" style="left:954px;top:79.00px;font-size:11.5px;color:#1a1a1a;">Select all</div>
<svg class="r" style="left:935px;top:98px;" width="16" height="16" viewBox="0 0 16 16"><g fill="none" stroke="#9a9a9a"><rect x="0.5" y="0.5" width="6" height="6"/><rect x="9.5" y="0.5" width="6" height="6"/><rect x="0.5" y="9.5" width="6" height="6"/><rect x="9.5" y="9.5" width="6" height="6"/></g></svg>
<div class="t" style="left:954px;top:101.00px;font-size:11.5px;color:#1a1a1a;">Select none</div>
<svg class="r" style="left:935px;top:120px;" width="16" height="16" viewBox="0 0 16 16"><rect x="0.5" y="0.5" width="7" height="7" fill="#fff" stroke="#7aa6d0"/><rect x="8.5" y="0.5" width="7" height="7" fill="#9fd0f5" stroke="#3d8ad0"/><rect x="0.5" y="8.5" width="7" height="7" fill="#9fd0f5" stroke="#3d8ad0"/><rect x="8.5" y="8.5" width="7" height="7" fill="#fff" stroke="#7aa6d0"/></svg>
<div class="t" style="left:954px;top:123.00px;font-size:11.5px;color:#1a1a1a;">Invert selection</div>
<svg class="r" style="left:297px;top:173px;" width="12" height="10" viewBox="0 0 12 10"><path d="M11.5 5 H1.5 M5.5 1 L1.5 5 L5.5 9" fill="none" stroke="#6b6b6b" stroke-width="1.3"/></svg>
<svg class="r" style="left:326px;top:173px;" width="12" height="10" viewBox="0 0 12 10"><path d="M0.5 5 H10.5 M6.5 1 L10.5 5 L6.5 9" fill="none" stroke="#c8c8c8" stroke-width="1.3"/></svg>
<svg class="r" style="left:353px;top:176px;" width="7" height="4" viewBox="0 0 7 4"><path d="M0.5 0.5 L3.5 3.5 L6.5 0.5" fill="none" stroke="#777" stroke-width="1.1"/></svg>
<svg class="r" style="left:371px;top:172px;" width="12" height="12" viewBox="0 0 12 12"><path d="M6 11.5 V1.5 M1.5 6 L6 1.5 L10.5 6" fill="none" stroke="#6b6b6b" stroke-width="1.3"/></svg>
<div class="r" style="left:390px;top:167px;width:453px;height:22px;background:#fff;box-sizing:border-box;border:1px solid #d9d9d9;"></div>
<svg class="r" style="left:392px;top:169px;" width="17" height="16" viewBox="0 0 17 16"><path d="M5 0 H12 V7 H16.5 L8.5 15.5 L0.5 7 H5 Z" fill="#3b8fe0"/></svg>
<svg class="r" style="left:416px;top:175px;" width="4" height="6" viewBox="0 0 4 6"><path d="M0.7 0.7 L3 3 L0.7 5.3" fill="none" stroke="#808080" stroke-width="1.6"/></svg>
<div class="t" style="left:430.6px;top:173.00px;font-size:12px;color:#1a1a1a;letter-spacing:-0.2px;">admin</div>
<svg class="r" style="left:473.5px;top:175px;" width="4" height="6" viewBox="0 0 4 6"><path d="M0.7 0.7 L3 3 L0.7 5.3" fill="none" stroke="#808080" stroke-width="1.6"/></svg>
<div class="t" style="left:487px;top:173.00px;font-size:12px;color:#1a1a1a;letter-spacing:-0.2px;">Downloads</div>
<svg class="r" style="left:812px;top:175px;" width="10" height="6" viewBox="0 0 10 6"><path d="M0.5 0.5 L5 5 L9.5 0.5" fill="none" stroke="#555" stroke-width="1.3"/></svg>
<div class="r" style="left:825px;top:168px;width:1px;height:20px;background:#e5e5e5;"></div>
<svg class="r" style="left:828px;top:171px;" width="12" height="13" viewBox="0 0 12 13"><path d="M9.5 3.5 A4.8 4.8 0 1 0 10.8 7" fill="none" stroke="#666" stroke-width="1.3"/><path d="M7 0.5 L10.5 3.5 L7 6" fill="none" stroke="#666" stroke-width="1.2"/></svg>
<div class="r" style="left:854px;top:167px;width:202px;height:22px;background:#fff;box-sizing:border-box;border:1px solid #d9d9d9;"></div>
<div class="t" style="left:863.5px;top:173.00px;font-size:12px;color:#6d6d6d;letter-spacing:-0.3px;">Search Downloads</div>
<svg class="r" style="left:1035px;top:172px;" width="12" height="12" viewBox="0 0 12 12"><circle cx="7" cy="5" r="3.8" fill="none" stroke="#555" stroke-width="1.3"/><path d="M4.3 7.7 L0.8 11.2" stroke="#555" stroke-width="1.5"/></svg>
<div class="r" style="left:284px;top:340px;width:139px;height:23px;background:#d9d9d9;"></div>
<div class="r" style="left:424px;top:196px;width:16px;height:387px;background:#f0f0f0;"></div>
<div class="r" style="left:424px;top:277px;width:16px;height:119px;background:#cdcdcd;"></div>
<svg class="r" style="left:429px;top:202px;" width="7" height="5" viewBox="0 0 7 5"><path d="M0.7 4.5 L3.5 1.3 L6.3 4.5" fill="none" stroke="#505050" stroke-width="1.9"/></svg>
<svg class="r" style="left:429px;top:571px;" width="7" height="5" viewBox="0 0 7 5"><path d="M0.7 0.5 L3.5 3.7 L6.3 0.5" fill="none" stroke="#505050" stroke-width="1.9"/></svg>
<svg class="r" style="left:324px;top:200px;" width="16" height="16" viewBox="0 0 16 16"><rect x="2" y="0" width="12" height="15" fill="#fad97a"/><rect x="12" y="10" width="2" height="5" fill="#e6b84a"/></svg>
<div class="t" style="left:345.5px;top:202.00px;font-size:12px;color:#1a1a1a;letter-spacing:-0.2px;">.ms-ad</div>
<svg class="r" style="left:324px;top:224px;" width="16" height="16" viewBox="0 0 16 16"><path d="M8 1 L15 4 V12 L8 15 L1 12 V4 Z" fill="#41c4e6"/><path d="M1 4 L8 7 L15 4 L8 1 Z" fill="#9be6f7"/><path d="M8 7 V15 L15 12 V4 Z" fill="#1f9fce"/></svg>
<div class="t" style="left:345.5px;top:226.00px;font-size:12px;color:#1a1a1a;letter-spacing:-0.2px;">3D Objects</div>
<svg class="r" style="left:324px;top:248px;" width="16" height="16" viewBox="0 0 16 16"><rect x="2" y="0" width="12" height="15" fill="#fdeeb8"/><rect x="2" y="0" width="12" height="15" fill="none" stroke="#f3dc94" stroke-width="0.7"/></svg>
<div class="t" style="left:345.5px;top:250.00px;font-size:12px;color:#1a1a1a;letter-spacing:-0.2px;">AppData</div>
<svg class="r" style="left:324px;top:272px;" width="16" height="16" viewBox="0 0 16 16"><rect x="0.5" y="2.5" width="15" height="11" fill="#e3f0fa" stroke="#5a8fc0"/><circle cx="5" cy="7" r="2" fill="#3a79c2"/><path d="M2 12 Q5 8 8 12 Z" fill="#3a79c2"/><rect x="9" y="6" width="5" height="1" fill="#5a7fa8"/><rect x="9" y="9" width="5" height="1" fill="#5a7fa8"/></svg>
<div class="t" style="left:345.5px;top:274.00px;font-size:12px;color:#1a1a1a;letter-spacing:-0.2px;">Contacts</div>
<svg class="r" style="left:324px;top:296px;" width="16" height="16" viewBox="0 0 16 16"><rect x="0" y="2" width="16" height="11" fill="#1e8ee8"/><rect x="0" y="12" width="16" height="1.5" fill="#0f6cc0"/></svg>
<div class="t" style="left:345.5px;top:298.00px;font-size:12px;color:#1a1a1a;letter-spacing:-0.2px;">Desktop</div>
<svg class="r" style="left:324px;top:320px;" width="16" height="16" viewBox="0 0 16 16"><path d="M2.5 0.5 H11 L13.5 3 V15.5 H2.5 Z" fill="#fff" stroke="#7a8899"/><rect x="4.5" y="4" width="7" height="1" fill="#3b7cc9"/><rect x="4.5" y="6.5" width="7" height="1" fill="#3b7cc9"/><rect x="4.5" y="9" width="7" height="1" fill="#3b7cc9"/><rect x="4.5" y="11.5" width="7" height="1" fill="#3b7cc9"/></svg>
<div class="t" style="left:345.5px;top:322.00px;font-size:12px;color:#1a1a1a;letter-spacing:-0.2px;">Documents</div>
<svg class="r" style="left:324px;top:344px;" width="16" height="16" viewBox="0 0 16 16"><path d="M5 0 H11 V7 H15.5 L8 15 L0.5 7 H5 Z" fill="#3c8fdf"/></svg>
<div class="t" style="left:345.5px;top:346.00px;font-size:12px;color:#1a1a1a;letter-spacing:-0.2px;">Downloads</div>
<svg class="r" style="left:324px;top:368px;" width="16" height="16" viewBox="0 0 16 16"><path d="M8 0.5 L10.2 5.6 L15.5 6 L11.4 9.5 L12.7 15 L8 12 L3.3 15 L4.6 9.5 L0.5 6 L5.8 5.6 Z" fill="#f7c85a" stroke="#d9a436" stroke-width="0.6"/></svg>
<div class="t" style="left:345.5px;top:370.00px;font-size:12px;color:#1a1a1a;letter-spacing:-0.2px;">Favorites</div>
<svg class="r" style="left:324px;top:392px;" width="16" height="16" viewBox="0 0 16 16"><path d="M3 15 Q2 7 9 6 V2.5 L15 8 L9 13 V9.5 Q6 9.5 3 15 Z" fill="#3c8fdf"/></svg>
<div class="t" style="left:345.5px;top:394.00px;font-size:12px;color:#1a1a1a;letter-spacing:-0.2px;">Links</div>
<svg class="r" style="left:324px;top:416px;" width="16" height="16" viewBox="0 0 16 16"><rect x="2" y="0" width="12" height="15" fill="#fdeeb8"/><rect x="2" y="0" width="12" height="15" fill="none" stroke="#f3dc94" stroke-width="0.7"/></svg>
<div class="t" style="left:345.5px;top:418.00px;font-size:12px;color:#1a1a1a;letter-spacing:-0.2px;">MicrosoftEdge</div>
<svg class="r" style="left:324px;top:440px;" width="16" height="16" viewBox="0 0 16 16"><path d="M7 1 V12" stroke="#2f87dc" stroke-width="1.6"/><ellipse cx="5" cy="12.5" rx="3.2" ry="2.4" fill="#2f87dc"/><path d="M7 1 Q13 4 11 9 Q11 5 7 4 Z" fill="#2f87dc"/></svg>
<div class="t" style="left:345.5px;top:442.00px;font-size:12px;color:#1a1a1a;letter-spacing:-0.2px;">Music</div>
<svg class="r" style="left:324px;top:464px;" width="16" height="16" viewBox="0 0 16 16"><path d="M3 13 Q0 13 0.5 10 Q1 7.5 4 8 Q5 3.5 9.5 4.5 Q12.5 5.5 12.5 8 Q16 8 15.5 11 Q15 13 13 13 Z" fill="#1f7ad8"/></svg>
<div class="t" style="left:345.5px;top:466.00px;font-size:12px;color:#1a1a1a;letter-spacing:-0.2px;">OneDrive</div>
<svg class="r" style="left:324px;top:488px;" width="16" height="16" viewBox="0 0 16 16"><rect x="0.5" y="2.5" width="15" height="11" fill="#fff" stroke="#8a96a3"/><rect x="2" y="4" width="12" height="8" fill="#a9c9ea"/><path d="M2 9 Q7 7 14 10 V12 H2 Z" fill="#4b6f7e"/></svg>
<div class="t" style="left:345.5px;top:490.00px;font-size:12px;color:#1a1a1a;letter-spacing:-0.2px;">Pictures</div>
<svg class="r" style="left:324px;top:512px;" width="16" height="16" viewBox="0 0 16 16"><path d="M6 2 Q11 1 13 5 L14 9 L12 10 L12 15 H5 L6 10 L2 11 Q1 8 4 6 Z" fill="#4b5a6e"/><path d="M1 7 L6 5 L7 12 L2 13 Z" fill="#5b9ad6"/></svg>
<div class="t" style="left:345.5px;top:514.00px;font-size:12px;color:#1a1a1a;letter-spacing:-0.2px;">Saved Games</div>
<svg class="r" style="left:324px;top:536px;" width="16" height="16" viewBox="0 0 16 16"><circle cx="9.5" cy="6" r="4.8" fill="#eef4fb" stroke="#8a9bb0" stroke-width="1.3"/><path d="M6 9.5 L1 14.5" stroke="#8a9bb0" stroke-width="2"/></svg>
<div class="t" style="left:345.5px;top:538.00px;font-size:12px;color:#1a1a1a;letter-spacing:-0.2px;">Searches</div>
<svg class="r" style="left:324px;top:560px;" width="16" height="16" viewBox="0 0 16 16"><rect x="1" y="0" width="14" height="16" fill="#2e2e2e"/><rect x="4" y="1.5" width="8" height="6" fill="#8fb85a"/><rect x="4" y="8.5" width="8" height="6" fill="#4a7fd0"/><rect x="1.8" y="1.0" width="1.2" height="1.4" fill="#ddd"/><rect x="13" y="1.0" width="1.2" height="1.4" fill="#ddd"/><rect x="1.8" y="3.6" width="1.2" height="1.4" fill="#ddd"/><rect x="13" y="3.6" width="1.2" height="1.4" fill="#ddd"/><rect x="1.8" y="6.2" width="1.2" height="1.4" fill="#ddd"/><rect x="13" y="6.2" width="1.2" height="1.4" fill="#ddd"/><rect x="1.8" y="8.8" width="1.2" height="1.4" fill="#ddd"/><rect x="13" y="8.8" width="1.2" height="1.4" fill="#ddd"/><rect x="1.8" y="11.4" width="1.2" height="1.4" fill="#ddd"/><rect x="13" y="11.4" width="1.2" height="1.4" fill="#ddd"/><rect x="1.8" y="14.0" width="1.2" height="1.4" fill="#ddd"/><rect x="13" y="14.0" width="1.2" height="1.4" fill="#ddd"/></svg>
<div class="t" style="left:345.5px;top:562.00px;font-size:12px;color:#1a1a1a;letter-spacing:-0.2px;">Videos</div>
<div class="t" style="left:462px;top:204.00px;font-size:12px;color:#5b6573;letter-spacing:-0.2px;">Name</div>
<div class="t" style="right:484px;top:204.00px;font-size:12px;color:#5b6573;letter-spacing:-0.2px;">Date modified</div>
<div class="t" style="left:866px;top:204.00px;font-size:12px;color:#5b6573;letter-spacing:-0.2px;">Type</div>
<div class="t" style="left:986.8px;top:204.00px;font-size:12px;color:#5b6573;letter-spacing:-0.2px;">Size</div>
<div class="r" style="left:859px;top:196px;width:1px;height:26px;background:#e5e5e5;"></div>
<div class="r" style="left:979px;top:196px;width:1px;height:26px;background:#e5e5e5;"></div>
<div class="r" style="left:1059px;top:196px;width:1px;height:26px;background:#e5e5e5;"></div>
<svg class="r" style="left:450px;top:237px;" width="11" height="6" viewBox="0 0 11 6"><path d="M0.5 0.5 L5.5 5.5 L10.5 0.5" fill="none" stroke="#7a8ca8" stroke-width="1.2"/></svg>
<div class="t" style="left:465.7px;top:232.00px;font-size:14.5px;color:#1e3a78;letter-spacing:0.6px;">Today</div>
<div class="r" style="left:510px;top:240px;width:551px;height:1px;background:#e2e6ec;"></div>
<div class="r" style="left:458px;top:255px;width:598px;height:22px;background:#d9d9d9;"></div>
<svg class="r" style="left:463px;top:259px;" width="15" height="13" viewBox="0 0 15 13"><ellipse cx="7" cy="6.5" rx="6.5" ry="6" fill="#4b8ed8"/><path d="M2 6 Q7 2 12 6" stroke="#cfe3f7" stroke-width="1.5" fill="none"/><circle cx="11" cy="10" r="3.5" fill="#3e6b28"/><circle cx="11" cy="10" r="1.6" fill="#e8d34a"/></svg>
<div class="t" style="left:482.6px;top:261.00px;font-size:12px;color:#1a1a1a;">V</div>
<div class="t" style="right:454px;top:261.00px;font-size:12px;color:#6d6d6d;letter-spacing:-0.3px;">10:59 AM</div>
<div class="t" style="left:866px;top:261.00px;font-size:12px;color:#6d6d6d;">Application</div>
<div class="t" style="right:229px;top:261.00px;font-size:12px;color:#6d6d6d;letter-spacing:-0.4px;">39,726 KB</div>
<svg class="r" style="left:449px;top:290px;" width="12" height="6" viewBox="0 0 12 6"><path d="M0.5 0.5 L6 5.5 L11.5 0.5" fill="none" stroke="#7a8ca8" stroke-width="1.2"/></svg>
<div class="t" style="left:465.3px;top:286.00px;font-size:14.5px;color:#1e3a78;letter-spacing:0.6px;">A long time ago</div>
<div class="r" style="left:580px;top:293px;width:481px;height:1px;background:#e2e6ec;"></div>
<svg class="r" style="left:464px;top:310px;" width="12" height="16" viewBox="0 0 12 16"><path d="M0.5 0.5 H8 L11.5 4 V15.5 H0.5 Z" fill="#fff" stroke="#a9a9a9"/><rect x="3" y="6" width="6" height="5" fill="#fff" stroke="#8c8c8c" stroke-width="0.8"/><rect x="4" y="8.5" width="4" height="2" fill="#7a93a8"/></svg>
<div class="t" style="left:482.4px;top:314.00px;font-size:12px;color:#1a1a1a;letter-spacing:-0.2px;">d</div>
<div class="t" style="right:455px;top:314.00px;font-size:12px;color:#6d6d6d;letter-spacing:-0.3px;">2:11 PM</div>
<div class="t" style="left:866px;top:314.00px;font-size:12px;color:#6d6d6d;letter-spacing:-0.5px;">JPG File</div>
<div class="t" style="right:229px;top:314.00px;font-size:12px;color:#6d6d6d;letter-spacing:-0.4px;">9 KB</div>
<svg class="r" style="left:464px;top:331px;" width="12" height="16" viewBox="0 0 12 16"><path d="M0.5 0.5 H8 L11.5 4 V15.5 H0.5 Z" fill="#fff" stroke="#a9a9a9"/><rect x="3" y="6" width="6" height="5" fill="#fff" stroke="#8c8c8c" stroke-width="0.8"/><rect x="4" y="8.5" width="4" height="2" fill="#7a93a8"/></svg>
<div class="t" style="left:482.4px;top:335.00px;font-size:12px;color:#1a1a1a;letter-spacing:-0.2px;">b</div>
<div class="t" style="right:467px;top:335.00px;font-size:12px;color:#6d6d6d;letter-spacing:-0.3px;">7 AM</div>
<div class="t" style="left:866px;top:335.00px;font-size:12px;color:#6d6d6d;letter-spacing:-0.5px;">JPG File</div>
<div class="t" style="right:229px;top:335.00px;font-size:12px;color:#6d6d6d;letter-spacing:-0.4px;">14 KB</div>
<svg class="r" style="left:464px;top:352px;" width="12" height="16" viewBox="0 0 12 16"><path d="M0.5 0.5 H8 L11.5 4 V15.5 H0.5 Z" fill="#fff" stroke="#a9a9a9"/><rect x="3" y="6" width="6" height="5" fill="#fff" stroke="#8c8c8c" stroke-width="0.8"/><rect x="4" y="8.5" width="4" height="2" fill="#7a93a8"/></svg>
<div class="t" style="left:482.4px;top:356.00px;font-size:12px;color:#1a1a1a;letter-spacing:-0.2px;">n</div>
<div class="t" style="right:461.4px;top:356.00px;font-size:12px;color:#6d6d6d;letter-spacing:-0.3px;">45 PM</div>
<div class="t" style="left:866px;top:356.00px;font-size:12px;color:#6d6d6d;letter-spacing:-0.5px;">JPG File</div>
<div class="t" style="right:229px;top:356.00px;font-size:12px;color:#6d6d6d;letter-spacing:-0.4px;">9 KB</div>
<svg class="r" style="left:464px;top:373px;" width="12" height="16" viewBox="0 0 12 16"><path d="M0.5 0.5 H8 L11.5 4 V15.5 H0.5 Z" fill="#fff" stroke="#a9a9a9"/><rect x="3" y="6" width="6" height="5" fill="#fff" stroke="#8c8c8c" stroke-width="0.8"/><rect x="4" y="8.5" width="4" height="2" fill="#7a93a8"/></svg>
<div class="t" style="left:482.4px;top:377.00px;font-size:12px;color:#1a1a1a;letter-spacing:-0.2px;">fa</div>
<div class="t" style="right:460.4px;top:377.00px;font-size:12px;color:#6d6d6d;letter-spacing:-0.3px;">28 AM</div>
<div class="t" style="left:866px;top:377.00px;font-size:12px;color:#6d6d6d;letter-spacing:-0.5px;">JPG File</div>
<div class="t" style="right:229px;top:377.00px;font-size:12px;color:#6d6d6d;letter-spacing:-0.4px;">27 KB</div>
<svg class="r" style="left:464px;top:394px;" width="12" height="16" viewBox="0 0 12 16"><path d="M0.5 0.5 H8 L11.5 4 V15.5 H0.5 Z" fill="#fff" stroke="#a9a9a9"/><rect x="3" y="6" width="6" height="5" fill="#fff" stroke="#8c8c8c" stroke-width="0.8"/><rect x="4" y="8.5" width="4" height="2" fill="#7a93a8"/></svg>
<div class="t" style="left:482.4px;top:398.00px;font-size:12px;color:#1a1a1a;letter-spacing:-0.2px;">m</div>
<div class="t" style="right:461.4px;top:398.00px;font-size:12px;color:#6d6d6d;letter-spacing:-0.3px;">35 PM</div>
<div class="t" style="left:866px;top:398.00px;font-size:12px;color:#6d6d6d;letter-spacing:-0.5px;">PNG File</div>
<div class="t" style="right:229px;top:398.00px;font-size:12px;color:#6d6d6d;letter-spacing:-0.4px;">5 KB</div>
<div class="r" style="left:443px;top:567px;width:624px;height:15px;background:#f0f0f0;"></div>
<div class="r" style="left:460.5px;top:567px;width:588px;height:15px;background:#cdcdcd;"></div>
<svg class="r" style="left:449px;top:571px;" width="6" height="8" viewBox="0 0 6 8"><path d="M5 0.7 L1.3 4 L5 7.3" fill="none" stroke="#505050" stroke-width="1.9"/></svg>
<svg class="r" style="left:1057px;top:571px;" width="6" height="8" viewBox="0 0 6 8"><path d="M1 0.7 L4.7 4 L1 7.3" fill="none" stroke="#505050" stroke-width="1.9"/></svg>
<div class="t" style="left:298.4px;top:589.00px;font-size:12px;color:#1e2a3a;letter-spacing:-0.2px;">6 items</div>
<div class="t" style="left:357.4px;top:589.00px;font-size:12px;color:#1e2a3a;letter-spacing:-0.25px;">1 item selected</div>
<div class="t" style="left:442.6px;top:589.00px;font-size:12px;color:#1e2a3a;letter-spacing:-0.3px;">38.7 MB</div>
<div class="r" style="left:1020px;top:583px;width:22px;height:22px;background:#cce8ff;box-sizing:border-box;border:1px solid #7fbef0;border-bottom:none;"></div>
<svg class="r" style="left:1024px;top:588px;" width="15" height="13" viewBox="0 0 15 13"><g fill="none" stroke="#555" stroke-width="0.9"><rect x="0.5" y="0.5" width="3" height="3"/><rect x="0.5" y="4.8" width="3" height="3"/><rect x="0.5" y="9.1" width="3" height="3"/></g><g fill="#555"><rect x="5.5" y="1.5" width="3.5" height="1.2"/><rect x="10.5" y="1.5" width="4" height="1.2"/><rect x="5.5" y="5.8" width="3.5" height="1.2"/><rect x="10.5" y="5.8" width="4" height="1.2"/><rect x="5.5" y="10.1" width="3.5" height="1.2"/><rect x="10.5" y="10.1" width="4" height="1.2"/></g></svg>
<svg class="r" style="left:1046px;top:588px;" width="14" height="11" viewBox="0 0 14 11"><rect x="0.5" y="0.5" width="13" height="10" fill="#fff" stroke="#8a96a3"/><rect x="2" y="2" width="10" height="7" fill="#9cc0e8"/><path d="M2 6 Q6 4 12 7 V9 H2 Z" fill="#2f4f4a"/></svg>
<div class="r" style="left:490px;top:190px;width:299px;height:299px;background:#121417;border-radius:9px;box-shadow:0 0 8px rgba(0,0,0,.25);"></div>
<svg class="r" style="left:579px;top:290px;" width="125" height="97" viewBox="0 0 125 97"><defs><linearGradient id="eye" gradientUnits="userSpaceOnUse" x1="0" y1="0" x2="0" y2="97"><stop offset="0" stop-color="#80abfb"/><stop offset="1" stop-color="#5a86ee"/></linearGradient><mask id="pm"><rect x="0" y="0" width="125" height="97" fill="#fff"/><circle cx="62.5" cy="48.3" r="25" fill="#000"/><circle cx="91" cy="26" r="27.5" fill="#fff"/></mask></defs><path d="M0 48 C13 18 36 1 62 1 C88 1 111 18 124 48 C111 78 88 96 62 96 C36 96 13 78 0 48 Z" fill="url(#eye)" mask="url(#pm)"/></svg>
<div class="r" style="left:0px;top:680px;width:1280px;height:40px;background:#061924;"></div>
<svg class="r" style="left:16px;top:691px;" width="17" height="18" viewBox="0 0 17 18"><path d="M0 2.5 L7 1.5 V8.3 H0 Z M8 1.35 L16 0.2 V8.3 H8 Z M0 9.3 H7 V16.1 L0 15.1 Z M8 9.3 H16 V17.4 L8 16.25 Z" fill="#fff"/></svg>
<div class="r" style="left:48px;top:680px;width:288px;height:40px;background:#fff;box-sizing:border-box;border:2px solid #c2c2c2;border-right-width:1px;"></div>
<svg class="r" style="left:60px;top:691px;" width="17" height="17" viewBox="0 0 17 17"><circle cx="10.5" cy="6.5" r="5.3" fill="none" stroke="#222" stroke-width="1.4"/><path d="M6.8 10.2 L0.8 16.2" stroke="#222" stroke-width="1.5"/></svg>
<div class="t" style="left:88.2px;top:693.00px;font-size:14.5px;color:#333;">Type here to search</div>
<svg class="r" style="left:351px;top:691px;" width="18" height="17" viewBox="0 0 18 17"><g fill="none" stroke="#fff" stroke-width="1.2"><path d="M1.6 0.5 V3.6 H11.4 V0.5"/><rect x="1.6" y="6" width="9.8" height="5.2"/><path d="M1.6 16.5 V13.6 H11.4 V16.5"/></g><rect x="15" y="0.5" width="1.3" height="3.5" fill="#fff"/><rect x="14.3" y="5.3" width="2.7" height="3.2" fill="#fff"/><rect x="15" y="9.5" width="1.3" height="7" fill="#fff"/></svg>
<svg class="r" style="left:399px;top:688px;" width="24" height="24" viewBox="0 0 24 24"><defs><linearGradient id="teg" x1="0" y1="0" x2="1" y2="0.7"><stop offset="0" stop-color="#2aa8e8"/><stop offset="0.5" stop-color="#3cc4c4"/><stop offset="1" stop-color="#66dc3c"/></linearGradient><linearGradient id="teb" x1="0" y1="0" x2="0.5" y2="1"><stop offset="0" stop-color="#2a88de"/><stop offset="1" stop-color="#1a4cab"/></linearGradient></defs><g transform="translate(-2 -2) scale(0.5)"><circle cx="28" cy="28" r="23.5" fill="url(#teg)"/><path d="M4.6 24 C6 17 12 14.5 18 14.5 C26 14.5 33 19 35.5 26 C37 31 41 36.5 47 36.5 C49 36.5 50.5 36 51.2 35.5 A23.5 23.5 0 0 1 4.6 24 Z" fill="url(#teb)"/><circle cx="27" cy="30.5" r="6" fill="#1d5fb8"/><circle cx="27.5" cy="31" r="3.5" fill="#0f2f60"/></g></svg>
<div class="r" style="left:391px;top:718px;width:40px;height:2px;background:#7db7ea;"></div>
<svg class="r" style="left:449px;top:689px;" width="22" height="20" viewBox="0 0 22 20"><path d="M0 1.5 H8 L10 3.5 H22 V19 H0 Z" fill="#e9b73a"/><rect x="0" y="5" width="22" height="14" fill="#fcd66e"/><path d="M5.5 10 H16.5 V19 H13.5 V13.5 H8.5 V19 H5.5 Z" fill="#3b8fe0"/></svg>
<div class="r" style="left:440px;top:718px;width:40px;height:2px;background:#7db7ea;"></div>
<svg class="r" style="left:496px;top:687px;" width="25" height="25" viewBox="0 0 25 25"><defs><linearGradient id="tff" x1="0.8" y1="0" x2="0.3" y2="1"><stop offset="0" stop-color="#ffe34a"/><stop offset="0.35" stop-color="#ffae2a"/><stop offset="0.7" stop-color="#ff5a2e"/><stop offset="1" stop-color="#f0285a"/></linearGradient><radialGradient id="tffp" cx="0.45" cy="0.35" r="0.7"><stop offset="0" stop-color="#9c62f2"/><stop offset="1" stop-color="#5d2ed0"/></radialGradient></defs><g transform="scale(0.5)"><path d="M34 2 C40 8 47 17 46 28 C45 40 36 47 24 47 C12 47 2.5 38 2.5 26 C2.5 18 6 11 11 7 L12 13 L16 9 L17 14 C20 12 26 11 30 13 C33 10 34 6 34 2 Z" fill="url(#tff)"/><circle cx="24" cy="25" r="9.5" fill="url(#tffp)"/><path d="M13 20 C16 15 24 13 30 17 C25 17 20 19 18 23 Z" fill="#ff8a28"/></g></svg>
<div class="r" style="left:534px;top:680px;width:48px;height:40px;background:#2d3a47;"></div>
<div class="r" style="left:534px;top:718px;width:48px;height:2px;background:#8fb3f0;"></div>
<svg class="r" style="left:547px;top:692px;" width="22" height="16" viewBox="0 0 22 16"><defs><mask id="tpm"><rect x="0" y="0" width="22" height="16" fill="#fff"/><circle cx="11" cy="8" r="4.3" fill="#000"/><circle cx="16" cy="4.3" r="4.6" fill="#fff"/></mask></defs><path d="M0 8 C3 3 6.5 0.2 11 0.2 C15.5 0.2 19 3 22 8 C19 13 15.5 15.8 11 15.8 C6.5 15.8 3 13 0 8 Z" fill="#7aa3f6" mask="url(#tpm)"/></svg>
<svg class="r" style="left:1073px;top:696px;" width="12" height="8" viewBox="0 0 12 8"><path d="M0.7 7 L6 1.5 L11.3 7" fill="none" stroke="#fff" stroke-width="1.2"/></svg>
<svg class="r" style="left:1097px;top:692px;" width="13" height="16" viewBox="0 0 13 16"><g fill="none" stroke="#fff" stroke-width="1.1"><rect x="1.5" y="5" width="7" height="6" rx="1"/><path d="M8.5 6.5 L11.5 5 V11 L8.5 9.5"/><path d="M2 2 Q6 0 10 2" stroke-dasharray="2 1"/><path d="M2 14 Q6 16 10 14" stroke-dasharray="2 1"/></g></svg>
<svg class="r" style="left:1119px;top:693px;" width="16" height="14" viewBox="0 0 16 14"><g fill="none" stroke="#fff" stroke-width="1.1"><rect x="3.5" y="1.5" width="12" height="8"/><path d="M9.5 9.5 V12.5 M6 12.5 H13"/><rect x="0.5" y="0.5" width="5" height="4" fill="#061924"/></g></svg>
<svg class="r" style="left:1142px;top:693px;" width="18" height="14" viewBox="0 0 18 14"><g fill="none" stroke="#fff" stroke-width="1.1"><path d="M0.5 4.5 H3.5 L7.5 0.8 V13.2 L3.5 9.5 H0.5 Z"/><path d="M10 4.5 Q11.5 7 10 9.5"/><path d="M12.5 2.5 Q15 7 12.5 11.5"/><path d="M15 0.8 Q18.5 7 15 13.2"/></g></svg>
<div class="t" style="left:994.5999999999999px;width:400px;text-align:center;top:685.00px;font-size:11.5px;color:#fff;">11:02 AM</div>
<div class="t" style="left:994.8px;width:400px;text-align:center;top:703.00px;font-size:11.5px;color:#fff;">4/21/2025</div>
<svg class="r" style="left:1238px;top:692px;" width="18" height="16" viewBox="0 0 18 16"><path d="M0.7 0.7 H16.3 V11.5 H11 L8.5 14.8 L6 11.5 H0.7 Z" fill="none" stroke="#fff" stroke-width="1.2"/></svg>
<div class="r" style="left:1275px;top:680px;width:1px;height:40px;background:#5a6470;"></div>
</body></html>
